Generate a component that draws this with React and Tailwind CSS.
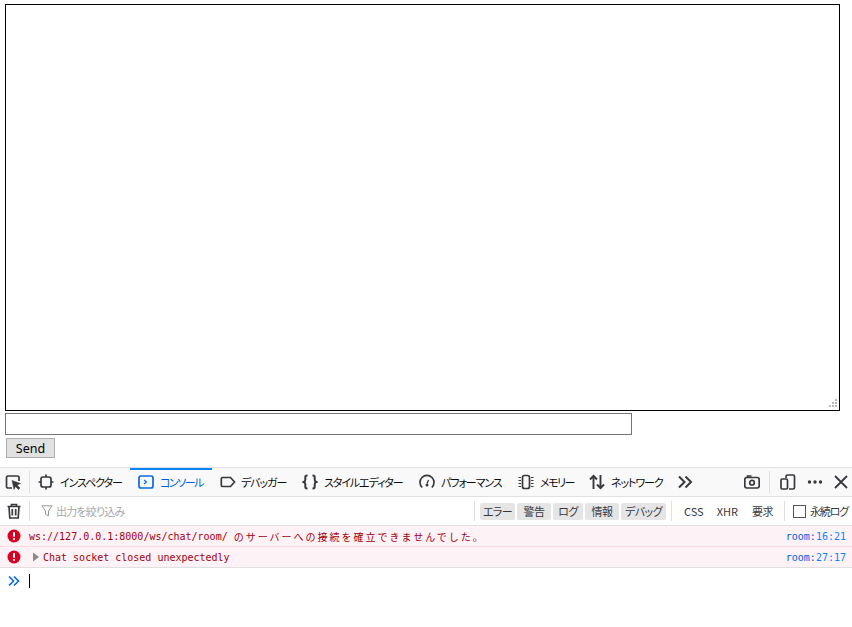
import React from 'react';

const Ico = ({ className = 'text-[#38383d]', size = 16, children }) => (
  <svg width={size} height={size} viewBox="0 0 16 16" fill="none" stroke="currentColor" strokeWidth="1.700" className={`shrink-0 ${className}`}>
    {children}
  </svg>
);

const tabs = [
  {
    label: 'インスペクター',
    w: 'w-[100px]',
    icon: (
      <>
        <rect x="3" y="3" width="10" height="10" rx="2" />
        <path d="M8 0.500V3M8 13v2.500M0.500 8H3M13 8h2.500" />
      </>
    ),
  },
  {
    label: 'コンソール',
    w: 'w-[82px]',
    text: 'tracking-[-1.500px]',
    active: true,
    icon: (
      <>
        <rect x="1" y="2" width="14" height="12" rx="2" />
        <path d="M6 6l2.500 2L6 10" strokeWidth="1.200" />
      </>
    ),
  },
  {
    label: 'デバッガー',
    w: 'w-[82px]',
    text: '-ml-px',
    icon: <path d="M2.500 3.500h8l4 4.500-4 4.500h-8a1.200 1.200 0 0 1-1.200-1.200V4.700a1.200 1.200 0 0 1 1.200-1.200z" />,
  },
  {
    label: 'スタイルエディター',
    w: 'w-[117px]',
    icon: (
      <path d="M5.500 1.500H5c-1.200 0-1.700.6-1.700 1.700v2.600c0 1.100-.4 1.700-1.600 2.200 1.200.5 1.600 1.100 1.600 2.200v2.600c0 1.100.5 1.700 1.700 1.700h.5M10.500 1.500h.5c1.200 0 1.700.6 1.700 1.700v2.600c0 1.100.4 1.700 1.600 2.200-1.200.5-1.600 1.100-1.600 2.200v2.600c0 1.100-.5 1.700-1.700 1.700h-.5" strokeWidth="2" />
    ),
  },
  {
    label: 'パフォーマンス',
    w: 'w-[99px]',
    icon: (
      <>
        <path d="M3.200 13.500a7 7 0 1 1 9.600 0" />
        <path d="M8 9.500l1.500-3.500" strokeWidth="1.300" />
        <circle cx="8" cy="11" r="1.500" fill="currentColor" stroke="none" />
      </>
    ),
  },
  {
    label: 'メモリー',
    w: 'w-[71px]',
    text: 'tracking-[-1.500px]',
    icon: (
      <>
        <rect x="4.500" y="1.500" width="7" height="13" rx="2" />
        <path d="M0.500 3.500H3M0.500 6.500H3M0.500 9.500H3M0.500 12.500H3M13 3.500h2.500M13 6.500h2.500M13 9.500h2.500M13 12.500h2.500" strokeWidth="1.100" />
      </>
    ),
  },
  {
    label: 'ネットワーク',
    w: 'w-[90px]',
    icon: <path d="M4.500 15V2M1 5.500l3.500-3.700L8 5.500M11.500 1v13M8 10.500l3.500 3.700 3.500-3.700" strokeWidth="1.900" />,
  },
];

const levels = [
  { label: 'エラー', w: 'w-[35px]' },
  { label: '警告', w: 'w-[34px]' },
  { label: 'ログ', w: 'w-[30px]' },
  { label: '情報', w: 'w-[34px]' },
  { label: 'デバッグ', w: 'w-[45px]' },
];

const ErrorIcon = () => (
  <svg width="14" height="14" viewBox="0 0 14 14" className="shrink-0">
    <circle cx="7" cy="7" r="6.500" fill="#d70022" />
    <rect x="6" y="3" width="2" height="5" rx="1" fill="#fff" />
    <circle cx="7" cy="10" r="1.100" fill="#fff" />
  </svg>
);

const Location = ({ line }) => (
  <span className="ml-auto mr-[6px] text-[#0060df]">
    room:<span className="text-[#0a84ff]">{line}</span>
  </span>
);

export default function App() {
  return (
    <div className="h-[627px] bg-white font-['Noto_Sans_CJK_JP',sans-serif] overflow-hidden">
      <div className="pt-[4px] pl-[5px] flex flex-col items-start">
        <div className="relative w-[835px] h-[407px]">
          <textarea className="block w-full h-full resize-none border border-black bg-white" />
          <svg width="10" height="10" viewBox="0 0 10 10" className="absolute right-[2px] bottom-[2px]" fill="#bbb">
            <rect x="7" y="0" width="2" height="2" />
            <rect x="4" y="3" width="2" height="2" />
            <rect x="7" y="3" width="2" height="2" />
            <rect x="1" y="6" width="2" height="2" />
            <rect x="4" y="6" width="2" height="2" />
            <rect x="7" y="6" width="2" height="2" />
          </svg>
        </div>
        <input className="block mt-[2px] w-[627px] h-[22px] border border-[#767676] bg-white" />
        <button className="block ml-[1px] mt-[3px] w-[49px] h-[20px] pt-px border border-[#adadad] bg-[#e1e1e1] text-[12.500px] leading-[18px] text-black font-['Noto_Sans',sans-serif]">
          Send
        </button>
      </div>

      {/* devtools tab bar */}
      <div className="mt-[9px] h-[30px] flex items-stretch border-y border-[#e0e0e1] bg-[#f9f9fa] text-[#0c0c0d] text-[11px] [font-feature-settings:'palt'] tracking-[-1.100px]">
        <div className="w-[29px] flex items-center pl-[5px]">
          <Ico>
            <path d="M7 14H3a1.500 1.500 0 0 1-1.500-1.500v-9A1.500 1.500 0 0 1 3 2h9.500A1.500 1.500 0 0 1 14 3.500V7" />
            <path d="M7 6.500l8.500 3-3.500 1.500 3 3-1.500 1.500-3-3L9 15.500z" fill="currentColor" strokeWidth="0.500" />
          </Ico>
        </div>
        <div className="w-px my-[3px] bg-[#e0e0e1]" />
        {tabs.map((t) => (
          <div
            key={t.label}
            className={`${t.w} flex items-center gap-[6px] pl-2 whitespace-nowrap border-t-2 pb-[2px] ${
              t.active ? 'border-[#0a84ff] text-[#0060df]' : 'border-transparent'
            }`}
          >
            <Ico className={t.active ? 'text-[#0a6ce0]' : 'text-[#38383d]'}>{t.icon}</Ico>
            <span className={t.text}>{t.label}</span>
          </div>
        ))}
        <div className="ml-[6px] flex items-center">
          <Ico>
            <path d="M2 2.500L7.500 8 2 13.500M8.500 2.500L14 8l-5.500 5.500" strokeWidth="2" />
          </Ico>
        </div>
        <div className="ml-auto flex items-center">
          <Ico>
            <rect x="0.800" y="3.500" width="14.400" height="10.500" rx="2" />
            <path d="M3.500 3.500V2h4" />
            <circle cx="8" cy="8.700" r="2.300" />
          </Ico>
          <div className="w-px h-[22px] ml-[9px] bg-[#e0e0e1]" />
          <div className="ml-[10px]">
            <Ico>
              <path d="M6 4V2.500A1.500 1.500 0 0 1 7.500 1H13a1.500 1.500 0 0 1 1.500 1.500v11A1.500 1.500 0 0 1 13 15H9" />
              <rect x="1" y="5" width="6.500" height="10" rx="1.200" />
            </Ico>
          </div>
          <div className="ml-[11px]">
            <Ico>
              <circle cx="2.500" cy="8" r="1.700" fill="currentColor" stroke="none" />
              <circle cx="8" cy="8" r="1.700" fill="currentColor" stroke="none" />
              <circle cx="13.500" cy="8" r="1.700" fill="currentColor" stroke="none" />
            </Ico>
          </div>
          <div className="ml-[10px] mr-[3px]">
            <Ico>
              <path d="M2 2l12 12M14 2L2 14" strokeWidth="1.800" />
            </Ico>
          </div>
        </div>
      </div>

      {/* filter bar */}
      <div className="h-[29px] flex items-center border-b border-[#e0e0e1] text-[11px] [font-feature-settings:'palt'] whitespace-nowrap">
        <div className="w-[29px] pl-[6px] shrink-0">
          <Ico>
            <path d="M1.500 3.500h13M5.500 3.500V1.500h5v2M3 3.500l.8 11.500h8.400L13 3.500M6.300 6v6.500M9.700 6v6.500" />
          </Ico>
        </div>
        <div className="w-px h-[20px] bg-[#e0e0e1] shrink-0" />
        <svg width="12" height="12" viewBox="0 0 12 12" fill="none" stroke="#999" strokeWidth="1" className="ml-[11px] mr-[3px] shrink-0">
          <path d="M0.800 0.800h10.400L7.500 6v4.800l-3-1.500V6z" />
        </svg>
        <span className="w-[70px] shrink-0 text-[#a8a8a8] tracking-[-0.800px]">出力を絞り込み</span>
        <div className="ml-[348px] w-px h-[20px] bg-[#e0e0e1] shrink-0" />
        <div className="ml-[5px] flex gap-[2px] text-[#38383d] shrink-0">
          {levels.map((l) => (
            <div key={l.label} className={`${l.w} h-[17px] flex items-center justify-center rounded-[2px] bg-[#e5e5e5] tracking-[-0.600px]`}>
              {l.label}
            </div>
          ))}
        </div>
        <div className="ml-[5px] w-px h-[20px] bg-[#e0e0e1] shrink-0" />
        <span className="ml-[12px] text-[#38383d] shrink-0">CSS</span>
        <span className="ml-[13px] text-[#38383d] shrink-0">XHR</span>
        <span className="ml-[14px] w-[21px] text-[#38383d] shrink-0 tracking-[-0.500px]">要求</span>
        <div className="ml-[11px] w-px h-[20px] bg-[#e0e0e1] shrink-0" />
        <div className="ml-[8px] w-[13px] h-[13px] border border-[#555] bg-white shrink-0" />
        <span className="ml-[4px] text-[#38383d] tracking-[-1.200px]">永続ログ</span>
      </div>

      {/* console output */}
      <div className="font-['DejaVu_Sans_Mono','Noto_Sans_CJK_JP',monospace] text-[10px] text-[#a4000f]">
        <div className="h-[21px] flex items-center pl-[7px] bg-[#fdf2f5] border-b border-[#fdd9e1] whitespace-nowrap">
          <ErrorIcon />
          <span className="ml-[8px]">ws://127.0.0.1:8000/ws/chat/room/</span>
          <span className="ml-[6px] tracking-[2px] font-['Noto_Sans_CJK_JP',sans-serif]">のサーバーへの接続を確立できませんでした。</span>
          <Location line="16:21" />
        </div>
        <div className="h-[21px] flex items-center pl-[7px] bg-[#fdf2f5] border-b border-[#e0e0e1] whitespace-nowrap">
          <ErrorIcon />
          <svg width="8" height="10" viewBox="0 0 8 10" fill="#8a8a8a" className="ml-[11px] mr-[3px]">
            <path d="M1 0.500L7 5l-6 4.500z" />
          </svg>
          <span>Chat socket closed unexpectedly</span>
          <Location line="27:17" />
        </div>
      </div>

      {/* prompt */}
      <div className="h-[26px] flex items-center pl-[8px]">
        <svg width="12" height="12" viewBox="0 0 12 12" fill="none" stroke="#0a6ce0" strokeWidth="1.700">
          <path d="M1 1.500L5.500 6 1 10.500M6 1.500L10.500 6 6 10.500" />
        </svg>
        <div className="ml-[9px] w-px h-[14px] bg-black" />
      </div>
    </div>
  );
}
